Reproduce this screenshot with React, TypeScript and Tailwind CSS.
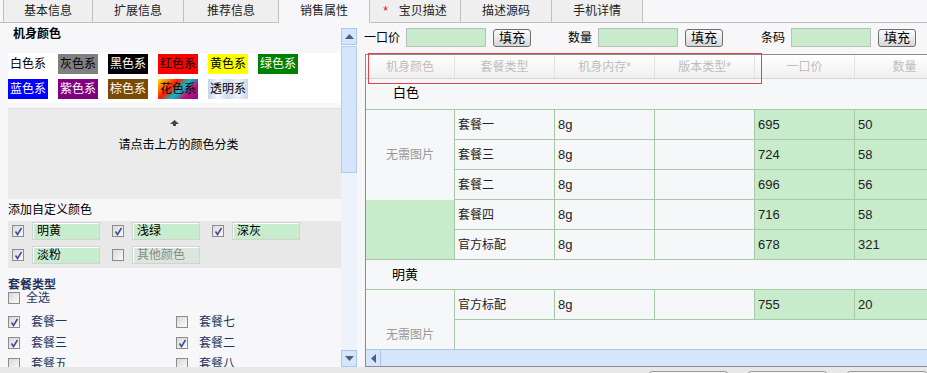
import clsx from "clsx"

type Tab = { label: string; w: string; active?: boolean; star?: boolean }

const tabs: Tab[] = [
    { label: "基本信息", w: "w-[90px] border-l" },
    { label: "扩展信息", w: "w-[91px]" },
    { label: "推荐信息", w: "w-[95px]" },
    { label: "销售属性", w: "w-[91px]", active: true },
    { label: "宝贝描述", w: "w-[91px]", star: true },
    { label: "描述源码", w: "w-[91px]" },
    { label: "手机详情", w: "w-[91px]" },
]

const swatches = [
    { label: "白色系", cls: "bg-white text-black" },
    { label: "灰色系", cls: "bg-[#808080] text-black" },
    { label: "黑色系", cls: "bg-black text-white" },
    { label: "红色系", cls: "bg-[#ff0000] text-black" },
    { label: "黄色系", cls: "bg-[#ffff00] text-black" },
    { label: "绿色系", cls: "bg-[#008000] text-white" },
    { label: "蓝色系", cls: "bg-[#0000ff] text-white" },
    { label: "紫色系", cls: "bg-[#800080] text-white" },
    { label: "棕色系", cls: "bg-[#7b4a05] text-white" },
    {
        label: "花色系",
        cls: "bg-[linear-gradient(135deg,#ffe800_0%,#ff1800_35%,#00c0c8_55%,#c01070_75%,#8010a0_100%)] text-black",
    },
    {
        label: "透明系",
        cls: "bg-[linear-gradient(90deg,#c4d4ee,#f6f9ff,#cddaf0,#f0f4fc,#c8d6ee)] text-black",
    },
]

const customColors = [
    { label: "明黄", on: true },
    { label: "浅绿", on: true },
    { label: "深灰", on: true },
    { label: "淡粉", on: true },
    { label: "其他颜色", on: false, disabled: true },
]

const packages = [
    { label: "套餐一", on: true },
    { label: "套餐七", on: false },
    { label: "套餐三", on: true },
    { label: "套餐二", on: true },
    { label: "套餐五", on: false },
    { label: "套餐八", on: false },
]

const headers = ["机身颜色", "套餐类型", "机身内存*", "版本类型*", "一口价", "数量"]

type Row = { pkg: string; mem: string; price: string; qty: string }

const whiteRows: Row[] = [
    { pkg: "套餐一", mem: "8g", price: "695", qty: "50" },
    { pkg: "套餐三", mem: "8g", price: "724", qty: "58" },
    { pkg: "套餐二", mem: "8g", price: "696", qty: "56" },
    { pkg: "套餐四", mem: "8g", price: "716", qty: "58" },
    { pkg: "官方标配", mem: "8g", price: "678", qty: "321" },
]

const cell = "border-r border-b border-[#a8c9a8] flex items-center pl-[3px]"

function Check({ on }: { on: boolean }) {
    return (
        <span className="inline-flex w-[12px] h-[12px] shrink-0 items-center justify-center border border-[#8c8c8c] bg-linear-to-br from-[#d9d9d9] to-[#fbfbfb]">
            {on && (
                <svg width="9" height="9" viewBox="0 0 9 9">
                    <path d="M1.5 4.5 L3.5 7.5 L7.5 1" fill="none" stroke="#3b4f9e" strokeWidth="1.6" />
                </svg>
            )}
        </span>
    )
}

function FillButton() {
    return (
        <button className="ml-[7px] w-[38px] h-[18px] rounded-[3px] border border-[#6e6e6e] bg-linear-to-b from-[#fdfdfd] to-[#d6d6d6] text-[13px] leading-none text-black">
            填充
        </button>
    )
}

function LeftPanel() {
    return (
        <div className="w-[341px] h-full overflow-hidden">
            <div className="h-[30px] pl-[13px] pt-[4px] font-bold text-[12px] leading-[14px]">机身颜色</div>

            <div className="ml-[8px] h-[50px] bg-white pt-[1px] grid grid-cols-[40px_40px_40px_40px_40px_40px] gap-x-[10px] gap-y-[5px] content-start">
                {swatches.map((s) => (
                    <div key={s.label} className={clsx("h-[20px] flex items-center justify-center text-[12px]", s.cls)}>
                        {s.label}
                    </div>
                ))}
            </div>

            <div className="ml-[8px] mt-[5px] h-[91px] bg-[#ebebeb] border-t border-[#e2e2e2] flex flex-col items-center pt-[11px]">
                <svg width="9" height="6" viewBox="0 0 9 6">
                    <path d="M4.5 0 L9 4 L6 4 L6 6 L3 6 L3 4 L0 4 Z" fill="#444" />
                </svg>
                <div className="mt-[10px] pl-[8px] text-[12px] text-black">请点击上方的颜色分类</div>
            </div>

            <div className="h-[22px] pl-[8px] flex items-center text-[12px]">添加自定义颜色</div>

            <div className="ml-[8px] h-[47px] bg-[#e8e8e8] pt-[1px] grid grid-cols-[100px_100px_100px] gap-y-[6px] content-start">
                {customColors.map((c) => (
                    <div key={c.label} className="flex items-center h-[18px] pl-[4px]">
                        <Check on={c.on} />
                        <div
                            className={clsx(
                                "ml-[8px] w-[68px] h-[18px] border border-[#d2d2d2] shadow-[inset_1px_1px_0_#fff] pl-[4px] flex items-center text-[12px]",
                                c.disabled ? "bg-[#dbe7dc] text-[#888]" : "bg-[#c8ecce] text-black"
                            )}
                        >
                            {c.label}
                        </div>
                    </div>
                ))}
            </div>

            <div className="pl-[8px] pt-[10px] text-[#1f355c] text-[12px]">
                <div className="font-bold leading-[14px]">套餐类型</div>
                <div className="flex items-center h-[12px] gap-[6px]">
                    <Check on={false} />
                    <span>全选</span>
                </div>
                <div className="mt-[12px] grid grid-cols-[168px_168px] gap-y-[9px]">
                    {packages.map((p) => (
                        <div key={p.label} className="flex items-center h-[12px] gap-[11px]">
                            <Check on={p.on} />
                            <span>{p.label}</span>
                        </div>
                    ))}
                </div>
            </div>
        </div>
    )
}

function VScrollbar() {
    return (
        <div className="w-[16px] h-full pt-[5px] flex flex-col">
            <div className="h-[17px] bg-[#d5e5fc] border border-[#abc7ee] flex items-center justify-center">
                <svg width="9" height="5" viewBox="0 0 9 5">
                    <path d="M0 5 L4.5 0 L9 5 Z" fill="#4b6080" />
                </svg>
            </div>
            <div className="mt-[1px] h-[127px] bg-[#d5e5fc] border border-[#b2cdf0]" />
            <div className="flex-1 bg-[#eef3fb]" />
            <div className="h-[17px] bg-[#d5e5fc] border border-[#abc7ee] flex items-center justify-center">
                <svg width="9" height="5" viewBox="0 0 9 5">
                    <path d="M0 0 L9 0 L4.5 5 Z" fill="#4b6080" />
                </svg>
            </div>
        </div>
    )
}

function DataRow({ r }: { r: Row }) {
    return (
        <>
            <div className={cell}>{r.pkg}</div>
            <div className={clsx(cell, "text-[13px]")}>{r.mem}</div>
            <div className={cell} />
            <div className={clsx(cell, "bg-[#c8ebcc] text-[13px]")}>{r.price}</div>
            <div className={clsx(cell, "bg-[#c8ebcc] text-[13px]")}>{r.qty}</div>
        </>
    )
}

function RightPanel() {
    return (
        <div className="flex-1 h-full overflow-hidden">
            <div className="mt-[5px] h-[19px] flex items-center text-[12px]">
                <span className="ml-[7px]">一口价</span>
                <div className="ml-[6px] w-[80px] h-[19px] bg-[#c8ebcc] border border-[#bdbdbd]" />
                <FillButton />
                <span className="ml-[37px]">数量</span>
                <div className="ml-[6px] w-[80px] h-[19px] bg-[#c8ebcc] border border-[#bdbdbd]" />
                <FillButton />
                <span className="ml-[38px]">条码</span>
                <div className="ml-[6px] w-[80px] h-[19px] bg-[#c8ebcc] border border-[#bdbdbd]" />
                <FillButton />
            </div>

            <div className="relative mt-[7px] ml-[8px] w-[700px] h-[313px] border-l border-t border-b border-[#8c8c8c] bg-[#f6f7f9] flex flex-col">
                <div className="h-[24px] flex border-b border-[#d4d4d4] bg-linear-to-b from-white to-[#f0f0f0] text-[12px] text-[#bdbdbd]">
                    {headers.map((h, i) => (
                        <div
                            key={h}
                            className={clsx(
                                "flex items-center justify-center border-r border-[#e3e3e3]",
                                i === 0 ? "w-[89px]" : "w-[100px]"
                            )}
                        >
                            {h}
                        </div>
                    ))}
                </div>

                <div className="h-[270px] overflow-hidden text-[12px] text-[#222]">
                    <div className="h-[31px] border-b border-[#a8c9a8] flex items-center pl-[27px] pb-[3px] text-[13px] text-black">白色</div>
                    <div className="grid grid-cols-[89px_100px_100px_100px_100px_100px] auto-rows-[30px]">
                        <div className="row-span-3 border-r border-[#a8c9a8] flex items-center justify-center text-[#999]">无需图片</div>
                        <DataRow r={whiteRows[0]} />
                        <DataRow r={whiteRows[1]} />
                        <DataRow r={whiteRows[2]} />
                        <div className="row-span-2 border-r border-b border-[#a8c9a8] bg-[#c8ebcc]" />
                        <DataRow r={whiteRows[3]} />
                        <DataRow r={whiteRows[4]} />
                    </div>
                    <div className="h-[30px] border-b border-[#a8c9a8] flex items-center pl-[26px] text-[13px] text-black">明黄</div>
                    <div className="grid grid-cols-[89px_100px_100px_100px_100px_100px] auto-rows-[30px]">
                        <div className="row-span-3 border-r border-[#a8c9a8] flex items-center justify-center text-[#999]">无需图片</div>
                        <DataRow r={{ pkg: "官方标配", mem: "8g", price: "755", qty: "20" }} />
                        <div className="col-span-5" />
                        <div className="col-span-5" />
                    </div>
                </div>

                <div className="h-[17px] flex bg-[#d5e5fc] border-t border-[#aac6ee]">
                    <div className="w-[15px] border-r border-[#aac6ee] flex items-center justify-center">
                        <svg width="5" height="9" viewBox="0 0 5 9">
                            <path d="M5 0 L0 4.5 L5 9 Z" fill="#4b6080" />
                        </svg>
                    </div>
                    <div className="flex-1" />
                </div>

                <div className="absolute left-[2px] top-[-2px] w-[394px] h-[31px] border border-[#e04444]" />
            </div>
        </div>
    )
}

export default function App() {
    return (
        <div className="w-[927px] h-[373px] overflow-hidden bg-[#f7f7f9] text-black text-[12px] font-['Liberation_Sans','Noto_Sans_CJK_SC',sans-serif]">
            <div className="flex h-[23px] text-[12px]">
                <div className="w-[3px] border-b border-[#bdbdbd]" />
                {tabs.map((t) => (
                    <div
                        key={t.label}
                        className={clsx(
                            "flex items-center justify-center border-r border-b border-[#c0c0c0] text-[#222]",
                            t.w,
                            t.active ? "bg-[#f7f7f9] border-b-transparent" : "bg-[#efefef]"
                        )}
                    >
                        {t.star && <span className="text-[#e00] mr-[11px]">*</span>}
                        {t.label}
                    </div>
                ))}
                <div className="flex-1 border-b border-[#bdbdbd]" />
            </div>

            <div className="flex h-[344px]">
                <LeftPanel />
                <VScrollbar />
                <RightPanel />
            </div>

            <div className="h-[6px] bg-[#e8e8e8] flex gap-[20px] pl-[649px] pt-[4px]">
                <div className="w-[92px] h-[20px] rounded-[3px] border border-[#9a9a9a] bg-[#f4f4f4]" />
                <div className="w-[93px] h-[20px] rounded-[3px] border border-[#9a9a9a] bg-[#f4f4f4]" />
                <div className="w-[93px] h-[20px] rounded-[3px] border border-[#9a9a9a] bg-[#f4f4f4]" />
            </div>
        </div>
    )
}
